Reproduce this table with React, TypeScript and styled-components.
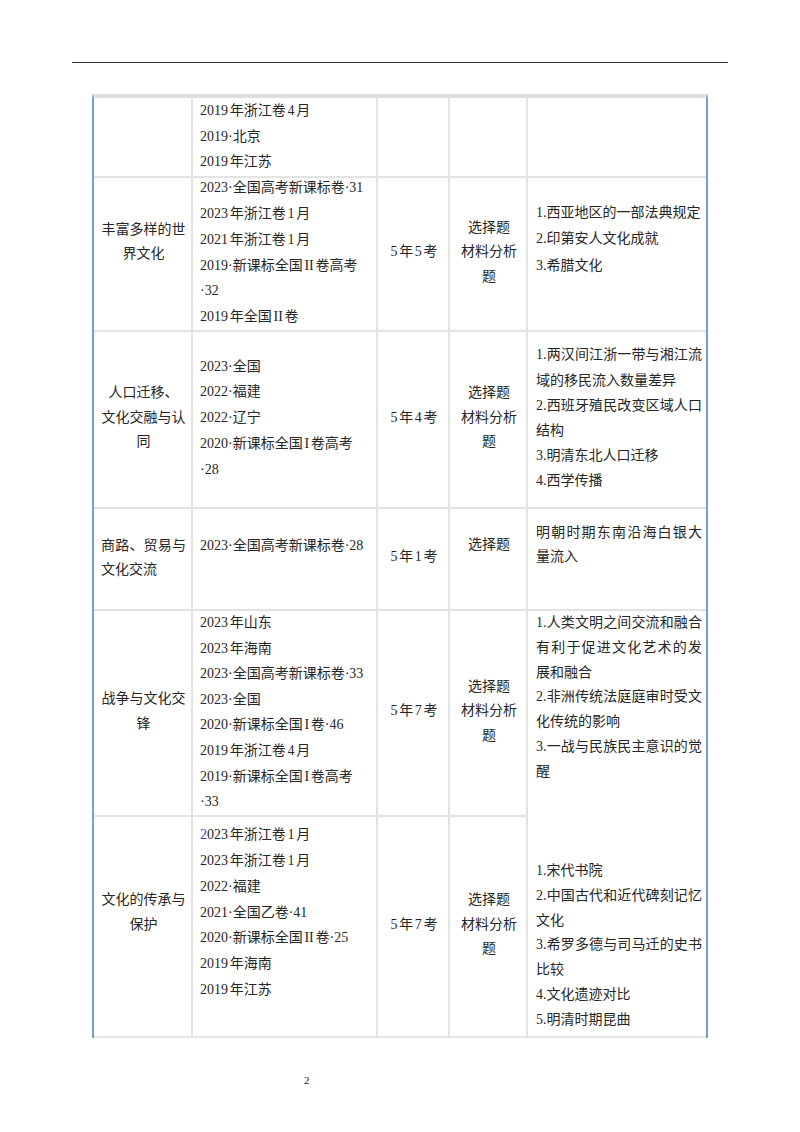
import React from "react";
import styled, { createGlobalStyle } from "styled-components";

const FONT = `"Liberation Serif", "Noto Sans CJK SC", serif`;

const GlobalStyle = createGlobalStyle`
  html, body {
    margin: 0;
    padding: 0;
    background: #ffffff;
  }
  body {
    font-family: ${FONT};
    color: #262626;
  }
`;

const Page = styled.div`
  width: 800px;
  height: 1132px;
  padding-top: 62px;
  box-sizing: border-box;
`;

const HeaderRule = styled.div`
  margin: 0 72px;
  border-top: 1.5px solid #333333;
`;

const TableFrame = styled.div`
  margin: 31px 0 0 92px;
  width: 612px;
  border-left: 2px solid #6f9fe3;
  border-right: 2px solid #6f9fe3;
  border-top: 4px solid #dedede;
`;

const Table = styled.table`
  width: 612px;
  border-collapse: separate;
  border-spacing: 0;
  table-layout: fixed;
  font-family: ${FONT};
  font-size: 14px;
  color: #262626;
  text-autospace: normal;
`;

const Row = styled.tr<{ $h: number }>`
  height: ${(p) => p.$h}px;
`;

type Align = "left" | "center";

const Cell = styled.td<{ $align?: Align; $lh?: number; $last?: boolean; $top?: boolean }>`
  box-sizing: border-box;
  padding: ${(p) => (p.$last ? "0 4px 0 8px" : "0 5px 0 7px")};
  border-right: ${(p) => (p.$last ? "none" : "2px solid #e3e3e3")};
  border-bottom: 2px solid #e3e3e3;
  vertical-align: ${(p) => (p.$top ? "top" : "middle")};
  text-align: ${(p) => p.$align ?? "left"};
  line-height: ${(p) => p.$lh ?? 24.5}px;
  overflow: visible;
`;

const Content = styled.div<{ $shift?: number }>`
  margin-top: ${(p) => -(p.$shift ?? 3)}px;
`;

const Line = styled.div<{ $justify?: boolean }>`
  white-space: ${(p) => (p.$justify ? "normal" : "nowrap")};
  text-align: ${(p) => (p.$justify ? "justify" : "inherit")};
  text-align-last: ${(p) => (p.$justify ? "justify" : "auto")};
`;

const Marked = styled.span`
  color: #3b3bd6;
`;

const PageNo = styled.div`
  margin-top: 35px;
  padding-left: 304px;
  font-size: 11px;
  line-height: 14px;
  color: #222222;
`;

type L = string | { t: string; j: true };

function Lines({ items, shift }: { items: L[]; shift?: number }) {
  return (
    <Content $shift={shift}>
      {items.map((it, i) =>
        typeof it === "string" ? (
          <Line key={i}>{it === "" ? "\u00a0" : it}</Line>
        ) : (
          <Line key={i} $justify>
            {it.t}
          </Line>
        )
      )}
    </Content>
  );
}

const j = (t: string): L => ({ t, j: true });

const MATERIAL = ["选择题", "材料分析", "题"];

export default function App() {
  return (
    <>
      <GlobalStyle />
      <Page>
        <HeaderRule />
        <TableFrame>
          <Table>
            <colgroup>
              <col style={{ width: 99 }} />
              <col style={{ width: 185 }} />
              <col style={{ width: 72 }} />
              <col style={{ width: 78 }} />
              <col style={{ width: 178 }} />
            </colgroup>
            <tbody>
              <Row $h={80}>
                <Cell />
                <Cell $lh={25.7} $top>
                  <Lines shift={0} items={["2019年浙江卷4月", "2019·北京", "2019年江苏"]} />
                </Cell>
                <Cell />
                <Cell />
                <Cell $last />
              </Row>

              <Row $h={154}>
                <Cell $align="center" $lh={24}>
                  <Lines shift={0} items={["丰富多样的世", "界文化", ""]} />
                </Cell>
                <Cell $lh={25.7}>
                  <Lines
                    items={[
                      "2023·全国高考新课标卷·31",
                      "2023年浙江卷1月",
                      "2021年浙江卷1月",
                      "2019·新课标全国II卷高考",
                      "·32",
                      "2019年全国II卷",
                    ]}
                  />
                </Cell>
                <Cell $align="center">
                  <Lines items={["5年5考"]} />
                </Cell>
                <Cell $align="center">
                  <Lines items={MATERIAL} />
                </Cell>
                <Cell $last $lh={26.3}>
                  <Lines items={["1.西亚地区的一部法典规定", "2.印第安人文化成就", "3.希腊文化", ""]} />
                </Cell>
              </Row>

              <Row $h={177}>
                <Cell $align="center">
                  <Lines items={["人口迁移、", "文化交融与认", "同"]} />
                </Cell>
                <Cell $lh={25.7}>
                  <Lines items={["2023·全国", "2022·福建", "2022·辽宁", "2020·新课标全国I卷高考", "·28"]} />
                </Cell>
                <Cell $align="center">
                  <Lines items={["5年4考"]} />
                </Cell>
                <Cell $align="center">
                  <Lines items={MATERIAL} />
                </Cell>
                <Cell $last $lh={25.2}>
                  <Lines
                    items={[
                      j("1.两汉间江浙一带与湘江流"),
                      "域的移民流入数量差异",
                      j("2.西班牙殖民改变区域人口"),
                      "结构",
                      "3.明清东北人口迁移",
                      "4.西学传播",
                    ]}
                  />
                </Cell>
              </Row>

              <Row $h={102}>
                <Cell $lh={23.5}>
                  <Lines items={[j("商路、贸易与"), "文化交流"]} />
                </Cell>
                <Cell $lh={25}>
                  <Lines items={["2023·全国高考新课标卷·28", ""]} />
                </Cell>
                <Cell $align="center">
                  <Lines items={["5年1考"]} />
                </Cell>
                <Cell $align="center">
                  <Lines items={["选择题", ""]} />
                </Cell>
                <Cell $last>
                  <Lines items={[j("明朝时期东南沿海白银大"), "量流入", ""]} />
                </Cell>
              </Row>

              <Row $h={205}>
                <Cell $align="center" $lh={25}>
                  <Lines items={["战争与文化交", "锋"]} />
                </Cell>
                <Cell $lh={25.6}>
                  <Lines
                    shift={1}
                    items={[
                      "2023年山东",
                      "2023年海南",
                      "2023·全国高考新课标卷·33",
                      "2023·全国",
                      "2020·新课标全国I卷·46",
                      "2019年浙江卷4月",
                      "2019·新课标全国I卷高考",
                      "·33",
                    ]}
                  />
                </Cell>
                <Cell $align="center">
                  <Lines items={["5年7考"]} />
                </Cell>
                <Cell $align="center">
                  <Lines items={MATERIAL} />
                </Cell>
                <Cell $last $top $lh={24.8} rowSpan={2}>
                  <Lines
                    shift={0}
                    items={[
                      j("1.人类文明之间交流和融合"),
                      j("有利于促进文化艺术的发"),
                      "展和融合",
                      j("2.非洲传统法庭庭审时受文"),
                      "化传统的影响",
                      j("3.一战与民族民主意识的觉"),
                      "醒",
                      "",
                      "",
                      "",
                      "1.宋代书院",
                      j("2.中国古代和近代碑刻记忆"),
                      "文化",
                      j("3.希罗多德与司马迁的史书"),
                      "比较",
                      "4.文化遗迹对比",
                      "5.明清时期昆曲",
                    ]}
                  />
                </Cell>
              </Row>

              <Row $h={221}>
                <Cell $align="center">
                  <Lines items={["文化的传承与", "保护", ""]} />
                </Cell>
                <Cell $lh={25.7}>
                  <Content $shift={2}>
                    <Line>
                      <Marked>2</Marked>023年浙江卷1月
                    </Line>
                    {[
                      "2023年浙江卷1月",
                      "2022·福建",
                      "2021·全国乙卷·41",
                      "2020·新课标全国II卷·25",
                      "2019年海南",
                      "2019年江苏",
                    ].map((t) => (
                      <Line key={t}>{t}</Line>
                    ))}
                    <Line>{"\u00a0"}</Line>
                  </Content>
                </Cell>
                <Cell $align="center">
                  <Lines items={["5年7考"]} />
                </Cell>
                <Cell $align="center">
                  <Lines items={MATERIAL} />
                </Cell>
              </Row>
            </tbody>
          </Table>
        </TableFrame>
        <PageNo>2</PageNo>
      </Page>
    </>
  );
}
